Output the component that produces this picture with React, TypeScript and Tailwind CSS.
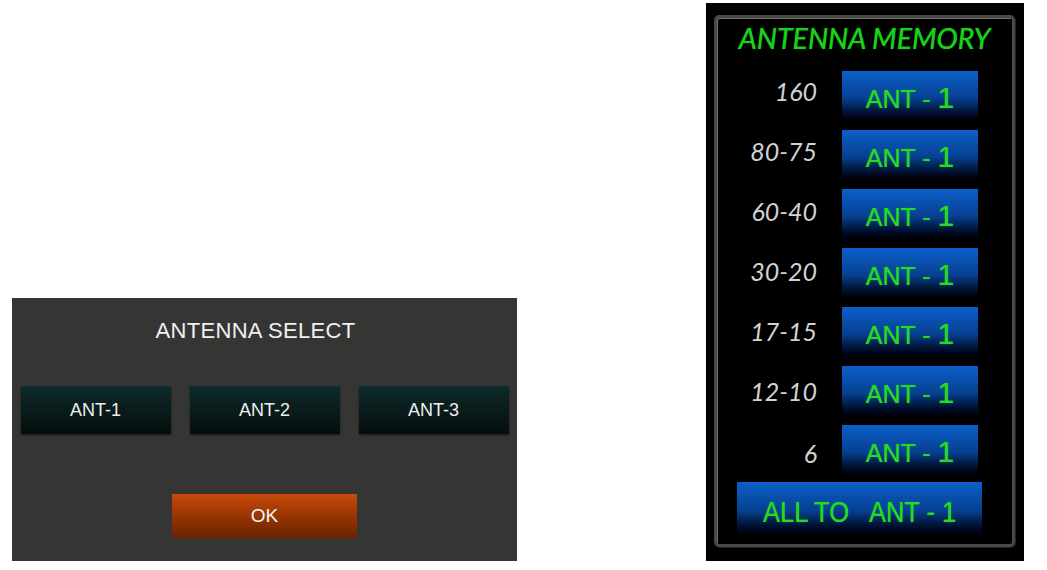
import React from 'react';

// label offsets drift slightly per row, as in the original panel
const bands = [
  { name: '160', pad: 'pb-[14px]' },
  { name: '80-75', pad: 'pb-[12px]' },
  { name: '60-40', pad: 'pb-[10px]' },
  { name: '30-20', pad: 'pb-[8px]' },
  { name: '17-15', pad: 'pb-[6px]' },
  { name: '12-10', pad: 'pb-[4px]' },
  { name: '6', pad: 'pt-[2px]' },
];

const AntennaSelect = () => {
  return (
    <div className="w-[505px] h-[263px] bg-[#353634] flex flex-col items-center font-['Liberation_Sans',Arial,sans-serif]">
      <div className="mt-[21px] ml-[-18px] h-[24px] leading-[24px] text-[22px] tracking-[0.3px] text-[#f0f0f0]">ANTENNA SELECT</div>

      <div className="mt-[43px] flex gap-[19px]">
        {['ANT-1', 'ANT-2', 'ANT-3'].map((ant) => (
          <button
            key={ant}
            className="w-[150px] h-[48px] bg-linear-to-b from-[#0d2c2b] to-[#060d0d] text-[18px] text-[#eeeeee] shadow-[0_1px_2px_rgba(0,0,0,0.5)]"
          >
            {ant}
          </button>
        ))}
      </div>

      <button className="mt-[60px] w-[185px] h-[44px] bg-linear-to-b from-[#c9490b] to-[#6a2200] text-[19px] text-[#f4f4f4]">
        OK
      </button>
    </div>
  );
};

// small buttons: "ANT - " a bit smaller than the "1"
const AntLabel = () => (
  <span className="text-[#25d925] font-['Liberation_Sans',Arial,sans-serif] whitespace-pre [text-shadow:0_0_1px_#25d925]">
    <span className="text-[25px]">{'ANT - '}</span>
    <span className="text-[30px]">1</span>
  </span>
);

const blueBtn = 'bg-linear-to-b from-[#0b60cc] via-[#06408f] to-[#000000]';

const AntennaMemory = () => {
  return (
    <div className="w-[318px] h-[558px] bg-black pt-[12px] pl-[8px] pr-[9px] pb-[14px]">
      <div className="h-full rounded-[5px] border-[3px] border-[#484848] shadow-[inset_1px_1px_0_#707070,1px_1px_0_#222] flex flex-col">
        <div className="mt-[4px] self-center h-[32px] leading-[32px] text-[28.5px] italic text-[#19d119] font-['Lato','Open_Sans',sans-serif] [text-shadow:0_0_1px_#19d119]">
          ANTENNA MEMORY
        </div>

        <div className="mt-[17px] flex flex-col gap-[4px]">
          {bands.map((b) => (
            <div key={b.name} className="flex items-center">
              <div className={`w-[100px] ${b.pad} text-right italic text-[25px] text-[#d2d2d2] font-['Lato','Open_Sans',sans-serif]`}>
                {b.name}
              </div>
              <button className={`ml-[25px] w-[136px] h-[55px] ${blueBtn} flex items-center justify-center pb-[2px]`}>
                <AntLabel />
              </button>
            </div>
          ))}
        </div>

        <button className={`mt-[2px] ml-[20px] w-[245px] h-[58px] ${blueBtn} flex items-center justify-center`}>
          <span className="inline-block scale-x-85 text-[30px] text-[#25d925] font-['Liberation_Sans',Arial,sans-serif] whitespace-pre [text-shadow:0_0_1px_#25d925]">
            {'ALL TO   ANT - 1'}
          </span>
        </button>
      </div>
    </div>
  );
};

export default function App() {
  return (
    <div className="w-[1047px] h-[570px] bg-white flex">
      <div className="pl-[12px] pt-[298px]">
        <AntennaSelect />
      </div>
      <div className="ml-[189px] pt-[3px]">
        <AntennaMemory />
      </div>
    </div>
  );
}
